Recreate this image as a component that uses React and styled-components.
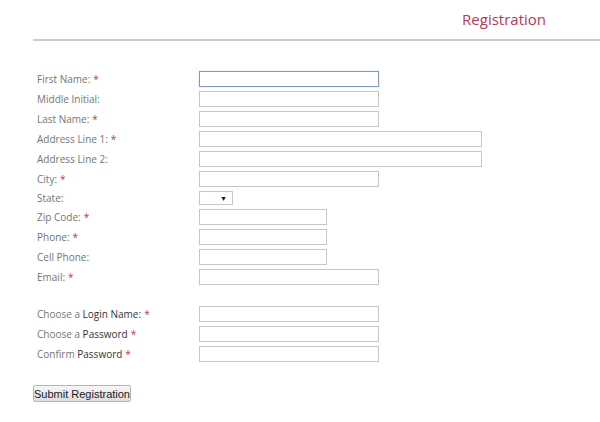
import React from "react";
import styled, { createGlobalStyle } from "styled-components";

const GlobalStyle = createGlobalStyle`
  html, body {
    margin: 0;
    padding: 0;
    background: #fff;
  }
  body {
    font-family: "Open Sans", "Liberation Sans", sans-serif;
  }
`;

const Page = styled.div`
  width: 600px;
  height: 422px;
  overflow: hidden;
  padding-top: 9px;
  box-sizing: border-box;
`;

const Header = styled.header`
  margin-left: 33px;
  border-bottom: 2px solid #cbcbcb;
  height: 30px;
  display: flex;
  justify-content: flex-end;
  padding-right: 54px;
`;

const Title = styled.h1`
  margin: 0;
  font-size: 15px;
  font-weight: 400;
  color: #b33a55;
  line-height: 20px;
`;

const Form = styled.form`
  padding: 30px 0 0 33px;
`;

const Fields = styled.div`
  display: grid;
  grid-template-columns: 166px auto;
  row-gap: 4px;
  align-items: center;
  margin-bottom: ${(p) => p.$gap || 0}px;
`;

const Label = styled.label`
  padding-left: 4px;
  font-size: 10px;
  color: #747474;
  line-height: ${(p) => (p.$short ? 14 : 16)}px;
`;

const Strong = styled.span`
  color: #333;
`;

const Req = styled.span`
  color: #c2334f;
  margin-left: 3px;
`;

const Input = styled.input`
  box-sizing: border-box;
  width: ${(p) => p.$w}px;
  height: 16px;
  margin: 0;
  padding: 0 2px;
  border: 1px solid ${(p) => (p.$focus ? "#7f9dc4" : "#c6c6c6")};
  box-shadow: ${(p) => (p.$focus ? "0 0 1px #a9c0de" : "none")};
  background: #fff;
  outline: none;
  justify-self: start;
`;

const SelectBox = styled.div`
  box-sizing: border-box;
  width: 34px;
  height: 14px;
  border: 1px solid #c6c6c6;
  display: flex;
  align-items: center;
  justify-content: flex-end;
  padding-right: 5px;
  font-size: 7px;
  color: #111;
`;

const Button = styled.button`
  margin-top: 23px;
  box-sizing: border-box;
  width: 98px;
  height: 17px;
  padding: 0;
  font-family: "Liberation Sans", Arial, sans-serif;
  font-size: 11px;
  color: #1a1a1a;
  background: linear-gradient(#f7f7f7, #dedede);
  border: 1px solid #b4b4b4;
  border-radius: 2px;
`;

const main = [
  { label: "First Name:", req: true, w: 180, focus: true },
  { label: "Middle Initial:", w: 180 },
  { label: "Last Name:", req: true, w: 180 },
  { label: "Address Line 1:", req: true, w: 283 },
  { label: "Address Line 2:", w: 283 },
  { label: "City:", req: true, w: 180 },
  { label: "State:", select: true },
  { label: "Zip Code:", req: true, w: 128 },
  { label: "Phone:", req: true, w: 128 },
  { label: "Cell Phone:", w: 128 },
  { label: "Email:", req: true, w: 180 },
];

const login = [
  { pre: "Choose a ", strong: "Login Name:", w: 180 },
  { pre: "Choose a ", strong: "Password", w: 180 },
  { pre: "Confirm ", strong: "Password", w: 180 },
];

export default function App() {
  return (
    <Page>
      <GlobalStyle />
      <Header>
        <Title>Registration</Title>
      </Header>
      <Form onSubmit={(e) => e.preventDefault()}>
        <Fields $gap={21}>
          {main.map((f) => (
            <React.Fragment key={f.label}>
              <Label $short={f.select}>
                {f.label}
                {f.req && <Req>*</Req>}
              </Label>
              {f.select ? (
                <SelectBox>▼</SelectBox>
              ) : (
                <Input $w={f.w} $focus={f.focus} />
              )}
            </React.Fragment>
          ))}
        </Fields>
        <Fields>
          {login.map((f, i) => (
            <React.Fragment key={i}>
              <Label>
                {f.pre}
                <Strong>{f.strong}</Strong>
                <Req>*</Req>
              </Label>
              <Input $w={f.w} type={i ? "password" : "text"} />
            </React.Fragment>
          ))}
        </Fields>
        <Button type="submit">Submit Registration</Button>
      </Form>
    </Page>
  );
}
